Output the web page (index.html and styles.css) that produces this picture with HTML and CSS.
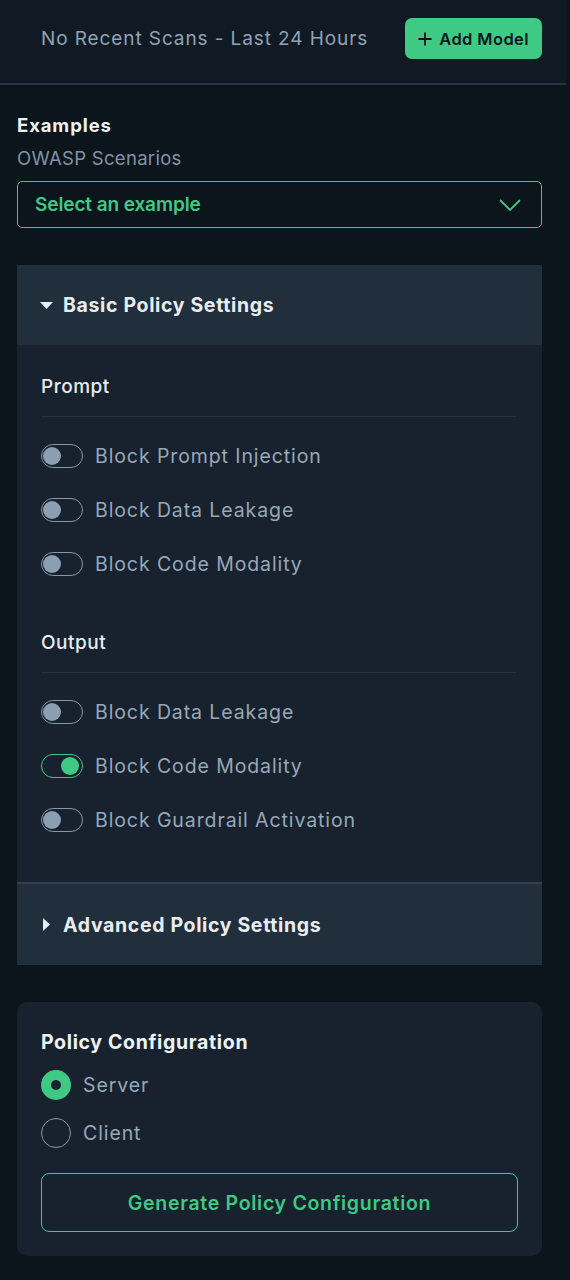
FILE: index.html
```html
<!DOCTYPE html>
<html>
<head>
<meta charset="utf-8">
<link rel="stylesheet" href="styles.css">
</head>
<body>
<div class="app">
  <header class="topbar">
    <span class="scans">No Recent Scans - Last 24 Hours</span>
    <button class="add-btn">
      <svg width="16" height="16" viewBox="0 0 16 16"><path d="M8 1.5v13M1.5 8h13" stroke="#0b151b" stroke-width="1.8" fill="none"/></svg>
      <span>Add Model</span>
    </button>
  </header>

  <main class="content">
    <section class="examples">
      <div class="ex-title">Examples</div>
      <div class="ex-sub">OWASP Scenarios</div>
      <div class="select">
        <span>Select an example</span>
        <svg width="22" height="12" viewBox="0 0 22 12"><path d="M1 1l10 10L21 1" stroke="#3ec985" stroke-width="1.8" fill="none"/></svg>
      </div>
    </section>

    <section class="panel">
      <div class="panel-head">
        <svg class="tri-down" width="13" height="7" viewBox="0 0 13 7"><path d="M0 0h13L6.5 7z" fill="#e8edf2"/></svg>
        <span>Basic Policy Settings</span>
      </div>
      <div class="panel-body">
        <div class="group">
          <div class="group-title">Prompt</div>
          <div class="rows">
            <div class="row"><span class="toggle"></span><span class="label">Block Prompt Injection</span></div>
            <div class="row"><span class="toggle"></span><span class="label">Block Data Leakage</span></div>
            <div class="row"><span class="toggle"></span><span class="label">Block Code Modality</span></div>
          </div>
        </div>
        <div class="group">
          <div class="group-title">Output</div>
          <div class="rows">
            <div class="row"><span class="toggle"></span><span class="label">Block Data Leakage</span></div>
            <div class="row"><span class="toggle on"></span><span class="label">Block Code Modality</span></div>
            <div class="row"><span class="toggle"></span><span class="label">Block Guardrail Activation</span></div>
          </div>
        </div>
      </div>
      <div class="panel-head adv">
        <svg class="tri-right" width="7" height="13" viewBox="0 0 7 13"><path d="M0 0v13l7-6.5z" fill="#e8edf2"/></svg>
        <span>Advanced Policy Settings</span>
      </div>
    </section>

    <section class="card">
      <div class="card-title">Policy Configuration</div>
      <div class="radios">
        <div class="radio-row"><span class="radio on"></span><span class="rlabel">Server</span></div>
        <div class="radio-row"><span class="radio"></span><span class="rlabel">Client</span></div>
      </div>
      <button class="gen-btn">Generate Policy Configuration</button>
    </section>
  </main>
</div>
</body>
</html>
```

FILE: styles.css
```css
* { box-sizing: border-box; }
html, body {
  margin: 0;
  padding: 0;
  background: #0b151b;
  font-family: Inter, Roboto, "Liberation Sans", sans-serif;
}
.app {
  width: 570px;
  min-height: 1280px;
  background: #0b151b;
}
.topbar {
  height: 85px;
  background: #111a23;
  border-bottom: 2px solid #27353f;
  display: flex;
  align-items: center;
  justify-content: space-between;
  padding: 0 24px 6px 41px;
  width: 566px;
}
.scans {
  color: #8fa3b6;
  font-size: 19px;
  letter-spacing: 0.9px;
}
.add-btn {
  display: flex;
  align-items: center;
  gap: 6px;
  height: 41px;
  padding: 0 13px 0 12px;
  background: #3ec985;
  border: none;
  border-radius: 7px;
  color: #0b151b;
  font-family: inherit;
  font-size: 16.5px;
  font-weight: 600;
  letter-spacing: 0.4px;
}
.content {
  padding: 28px 28px 24px 17px;
  display: flex;
  flex-direction: column;
}
.examples {
  display: flex;
  flex-direction: column;
}
.ex-title {
  color: #eef2f5;
  font-size: 18.5px;
  font-weight: 700;
  line-height: 24px;
  letter-spacing: 0.9px;
}
.ex-sub {
  color: #8494a3;
  font-size: 18.5px;
  line-height: 24px;
  margin-top: 9px;
  letter-spacing: 0.3px;
}
.select {
  margin-top: 11px;
  height: 47px;
  border: 1px solid #3ec985;
  border-radius: 5px;
  display: flex;
  align-items: center;
  justify-content: space-between;
  padding: 0 20px 0 17px;
  color: #3ec985;
  font-size: 19px;
  font-weight: 600;
  letter-spacing: -0.1px;
}
.panel {
  margin-top: 37px;
  display: flex;
  flex-direction: column;
}
.panel-head {
  height: 80px;
  background: #212e3b;
  display: flex;
  align-items: center;
  padding-left: 23px;
  gap: 10px;
  color: #e8edf2;
  font-size: 19.5px;
  font-weight: 700;
  letter-spacing: 0.65px;
}
.panel-head.adv {
  height: 83px;
  border-top: 2px solid #2f404c;
  padding-left: 26px;
  gap: 13px;
}
.panel-body {
  background: #18222e;
  padding: 30px 26px 50px 24px;
  display: flex;
  flex-direction: column;
  gap: 55px;
}
.group-title {
  color: #e6ebef;
  font-size: 19px;
  font-weight: 500;
  line-height: 24px;
  padding-bottom: 17px;
  border-bottom: 1px solid #253240;
  letter-spacing: 0.5px;
}
.rows {
  display: flex;
  flex-direction: column;
  gap: 30px;
  padding-top: 27px;
}
.row {
  display: flex;
  align-items: center;
  gap: 12px;
  height: 24px;
}
.toggle {
  position: relative;
  width: 42px;
  height: 24px;
  border: 1px solid #8798a8;
  border-radius: 12px;
  flex: none;
}
.toggle::after {
  content: "";
  position: absolute;
  left: 1px;
  top: 2px;
  width: 18px;
  height: 18px;
  border-radius: 50%;
  background: #8c9fb2;
}
.toggle.on {
  border-color: #3ec985;
}
.toggle.on::after {
  left: 19px;
  background: #3ec985;
}
.label {
  color: #97a8b8;
  font-size: 19.5px;
  letter-spacing: 0.9px;
}
.card {
  margin-top: 37px;
  background: #17222e;
  border-radius: 10px;
  padding: 27px 24px 24px 24px;
  display: flex;
  flex-direction: column;
}
.card-title {
  color: #eef2f5;
  font-size: 19.5px;
  font-weight: 700;
  line-height: 26px;
  letter-spacing: 0.65px;
}
.radios {
  display: flex;
  flex-direction: column;
  gap: 18px;
  margin-top: 15px;
}
.radio-row {
  display: flex;
  align-items: center;
  gap: 12px;
  height: 30px;
}
.radio {
  width: 30px;
  height: 30px;
  border-radius: 50%;
  border: 1px solid #8798a8;
  flex: none;
}
.radio.on {
  border: 10px solid #3ec985;
  background: #17222e;
}
.rlabel {
  color: #97a8b8;
  font-size: 19.5px;
  letter-spacing: 0.9px;
}
.gen-btn {
  margin-top: 25px;
  height: 59px;
  border: 1px solid #3ec985;
  border-radius: 8px;
  background: transparent;
  color: #3ec985;
  font-family: inherit;
  font-size: 19.5px;
  font-weight: 600;
  letter-spacing: 0.7px;
}
```
